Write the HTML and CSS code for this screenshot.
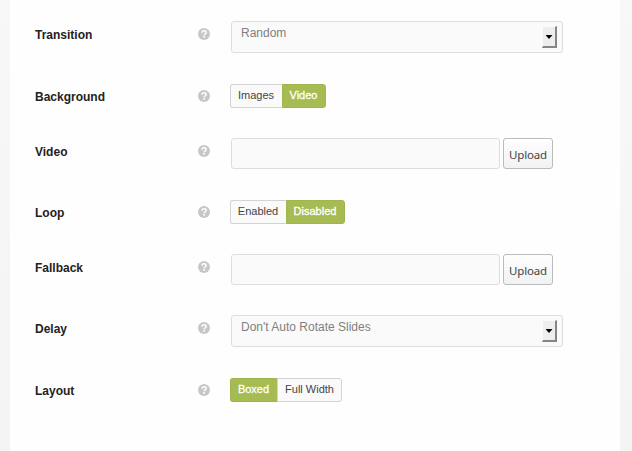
FILE: index.html
```html
<!DOCTYPE html>
<html lang="en">
<head>
<meta charset="utf-8">
<title>Slider settings</title>
<link rel="stylesheet" href="styles.css">
</head>
<body>
<svg width="0" height="0" class="defs">
  <symbol id="help" viewBox="0 0 12 12">
    <circle cx="6" cy="6" r="6" fill="#c7c7c7"/>
    <path d="M4 4.8C4 3.4 4.8 2.8 6 2.8s2.1.7 2.1 1.7c0 1.3-1.9 1.3-1.9 2.7" fill="none" stroke="#fff" stroke-width="1.5"/>
    <rect x="5.3" y="8" width="1.7" height="1.7" fill="#fff"/>
  </symbol>
</svg>
<main class="panel">
  <div class="row row-select">
    <label class="label">Transition</label>
    <svg class="help"><use href="#help"/></svg>
    <div class="select"><span>Random</span><i class="drop"></i></div>
  </div>
  <div class="row row-compact">
    <label class="label">Background</label>
    <svg class="help"><use href="#help"/></svg>
    <div class="toggle"><span class="option w-images">Images</span><span class="option active w-video">Video</span></div>
  </div>
  <div class="row row-field">
    <label class="label">Video</label>
    <svg class="help"><use href="#help"/></svg>
    <div class="upload"><input class="input" type="text"><button class="button">Upload</button></div>
  </div>
  <div class="row row-compact">
    <label class="label">Loop</label>
    <svg class="help"><use href="#help"/></svg>
    <div class="toggle"><span class="option w-enabled">Enabled</span><span class="option active w-disabled">Disabled</span></div>
  </div>
  <div class="row row-field">
    <label class="label">Fallback</label>
    <svg class="help"><use href="#help"/></svg>
    <div class="upload"><input class="input" type="text"><button class="button">Upload</button></div>
  </div>
  <div class="row row-select">
    <label class="label">Delay</label>
    <svg class="help"><use href="#help"/></svg>
    <div class="select"><span>Don't Auto Rotate Slides</span><i class="drop"></i></div>
  </div>
  <div class="row row-compact">
    <label class="label">Layout</label>
    <svg class="help"><use href="#help"/></svg>
    <div class="toggle"><span class="option active w-boxed">Boxed</span><span class="option w-full">Full Width</span></div>
  </div>
</main>
</body>
</html>
```
FILE: styles.css
```css
* { box-sizing: border-box; }
body {
  margin: 0;
  height: 451px;
  overflow: hidden;
  background: linear-gradient(#f8f8f8, #f4f4f4);
  font-family: "Liberation Sans", Arial, sans-serif;
}
.defs { display: none; }
.panel {
  height: 451px;
  margin: 0 12px 0 10px;
  padding-left: 25px;
  background: #fefefe;
}
.row {
  display: grid;
  grid-template-columns: 163px 32px 1fr;
  align-items: start;
}
.row-select { height: 62px; }
.row-field { height: 61px; }
.row-compact { height: 55px; }
.row-field, .row-select { padding-top: 21px; }
.row-compact { padding-top: 22px; }
.label {
  margin-top: 7px;
  font-size: 12px;
  font-weight: bold;
  line-height: 14px;
  color: #222;
}
.help {
  width: 12px;
  height: 12px;
  margin-top: 7px;
}
.row-compact .label, .row-compact .help { margin-top: 6px; }
.select {
  display: flex;
  justify-content: space-between;
  width: 332px;
  height: 32px;
  margin-left: 1px;
  padding: 4px 5px 0 9px;
  border: 1px solid #ddd;
  border-radius: 3px;
  background: #fafafa;
  color: #808080;
  font-size: 12px;
  line-height: 15px;
}
.drop {
  display: flex;
  justify-content: center;
  width: 15px;
  height: 22px;
  padding-top: 8px;
  border-right: 2px solid #858585;
  border-bottom: 2px solid #858585;
  border-left: 1px solid #fafafa;
  border-top: 1px solid #fafafa;
  background: #eee;
}
.drop::before {
  content: "";
  width: 7px;
  height: 4px;
  background: #000;
  clip-path: polygon(0 0, 100% 0, 50% 100%);
}
.toggle { display: flex; height: 24px; }
.option {
  padding-right: 1px;
  border: 1px solid #d3d3d3;
  background: #fafafa;
  color: #444;
  font-size: 11px;
  line-height: 21px;
  text-align: center;
  white-space: nowrap;
}
.option:first-child { border-right: 0; border-radius: 3px 0 0 3px; }
.option:last-child { border-radius: 0 3px 3px 0; }
.option.active {
  border-color: #a0b54d;
  background: #a6bb51;
  color: #fff;
  -webkit-text-stroke: 0.3px #fff;
}
.w-images { width: 52px; }
.w-video { width: 44px; }
.w-enabled { width: 56px; }
.w-disabled { width: 59px; }
.w-boxed { width: 47px; }
.w-full { width: 65px; padding-right: 0; }
.upload { display: flex; gap: 3px; margin-left: 1px; }
.input {
  width: 269px;
  height: 31px;
  border: 1px solid #ddd;
  border-radius: 3px;
  background: #fafafa;
}
.button {
  width: 50px;
  height: 31px;
  padding: 1px 0 0;
  border: 1px solid #bbb;
  border-radius: 3px;
  background: linear-gradient(#fefefe, #f2f2f2);
  color: #444;
  font: 11.5px "Noto Sans", sans-serif;
  letter-spacing: -0.15px;
}
```
